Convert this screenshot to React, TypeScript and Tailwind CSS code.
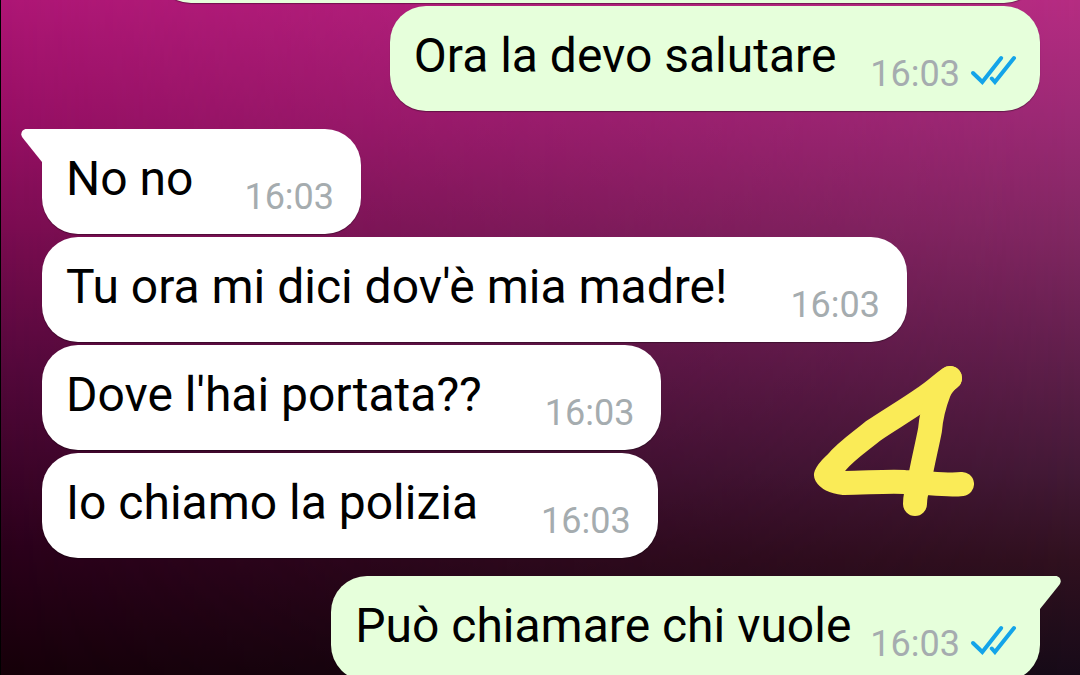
import { clsx } from "clsx";

type Message = {
  text: string;
  time: string;
  outgoing?: boolean;
  tail?: boolean;
  spacing: string;
  gap: string;
};

const messages: Message[] = [
  { text: "Ora la devo salutare", time: "16:03", outgoing: true, spacing: "mt-[3px]", gap: "gap-[34px]" },
  { text: "No no", time: "16:03", tail: true, spacing: "mt-[18px]", gap: "gap-[51px]" },
  { text: "Tu ora mi dici dov'è mia madre!", time: "16:03", spacing: "mt-[3px]", gap: "gap-[63px]" },
  { text: "Dove l'hai portata??", time: "16:03", spacing: "mt-[3px]", gap: "gap-[63px]" },
  { text: "Io chiamo la polizia", time: "16:03", spacing: "mt-[3px]", gap: "gap-[63px]" },
  { text: "Può chiamare chi vuole", time: "16:03", outgoing: true, tail: true, spacing: "mt-[18px]", gap: "gap-[19px]" },
];

function ReadTicks() {
  return (
    <svg
      className="h-8 w-12 shrink-0"
      viewBox="0 0 48 32"
      fill="none"
      stroke="#13a4e9"
      strokeWidth="4"
      strokeLinecap="round"
      role="img"
      aria-label="Letto"
    >
      <path d="M3 20 12.3 29 31.2 5" />
      <path d="M21.8 25.5 24.9 29 44 5" />
    </svg>
  );
}

function Tail({ outgoing }: { outgoing?: boolean }) {
  return (
    <svg
      className={clsx("absolute top-0 h-[34px] w-[23px]", outgoing ? "-right-[21px] -scale-x-100 text-[#e6ffdb]" : "-left-[21px] text-white")}
      viewBox="0 0 23 34"
      fill="currentColor"
      aria-hidden="true"
    >
      <path d="M23 0H5.5C1 0 -1.3 5 1.6 8.8L21 33H23Z" />
    </svg>
  );
}

function Bubble({ message }: { message: Message }) {
  const { text, time, outgoing, tail, spacing, gap } = message;
  return (
    <li
      className={clsx(
        "relative flex h-[105px] rounded-[36px] pl-6 pt-[22px] shadow-[0_1px_1px_rgba(0,0,0,0.35)]",
        spacing,
        gap,
        outgoing ? "self-end bg-[#e6ffdb] pr-[22px]" : "self-start bg-white pr-[27px]",
        tail && (outgoing ? "rounded-tr-none" : "rounded-tl-none"),
      )}
    >
      {tail && <Tail outgoing={outgoing} />}
      <p className="whitespace-nowrap text-[48px] leading-[56px] text-black">{text}</p>
      <div className="flex items-start gap-[10px] self-start pt-[25px]">
        <time className="text-[36px] leading-[42px] text-[#a5acaf]">{time}</time>
        {outgoing && <ReadTicks />}
      </div>
    </li>
  );
}

function DrawnFour() {
  return (
    <svg
      className="absolute right-[106px] top-[364px] h-[154px] w-[162px]"
      viewBox="812 364 162 154"
      fill="none"
      stroke="#faeb57"
      strokeWidth="24"
      strokeLinecap="round"
      strokeLinejoin="round"
      role="img"
      aria-label="4"
    >
      <path d="M950 378C941 384 936 390 925 397C905 411 889 420 873 431C861 441 846 451 837 462C832 467 828 470 826 475C829 480 835 482 844 483C865 483 885 481 905 482C926 482 945 486 962 484" />
      <path d="M950 378C943 384 941 387 939 392C934 405 931 418 930 430C927 446 922 465 919 484C916 492 915 498 915 504" />
    </svg>
  );
}

export default function App() {
  return (
    <main className="relative h-screen overflow-hidden border-l border-black bg-[linear-gradient(to_bottom,#ae1675_0%,#970f64_18%,#730b4c_38%,#53083a_55%,#2b011b_81%,#160009_100%)] font-['Roboto',sans-serif]">
      <div className="absolute inset-0 bg-[linear-gradient(to_bottom,#b52c82_0%,#9c2a75_17%,#812762_34%,#65204f_50%,#431936_70%,#30101f_83%,#170a18_100%)] [mask-image:linear-gradient(to_right,transparent,black)]" />
      <ul className="relative flex flex-col pl-[41px] pr-10">
        <li className="-mt-[102px] h-[105px] w-[885px] self-end rounded-[36px] bg-[#e6ffdb] shadow-[0_1px_1px_rgba(0,0,0,0.35)]" aria-hidden="true" />
        {messages.map((message) => (
          <Bubble key={message.text} message={message} />
        ))}
      </ul>
      <DrawnFour />
    </main>
  );
}
